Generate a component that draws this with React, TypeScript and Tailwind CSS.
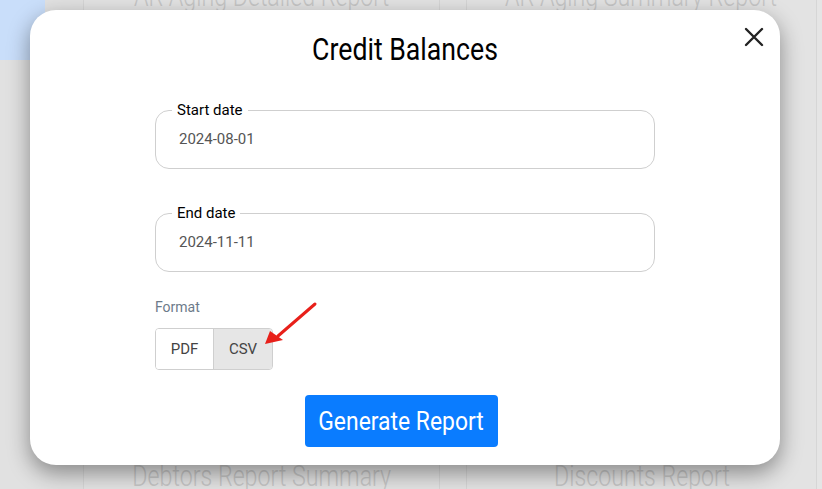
import React from "react";

const cond = { fontFamily: 'Roboto, "Noto Sans", sans-serif' };

function DateField({ label, value }: { label: string; value: string }) {
  return (
    <fieldset className="w-[500px] h-[68px] border border-[#cfcfcf] rounded-[14px] px-[16px] pb-[4px] m-0">
      <legend className="px-[5px] text-[15px] text-black leading-[18px]">{label}</legend>
      <div className="pl-[7px] pt-[11px] text-[15px] text-[#555] leading-[18px]">{value}</div>
    </fieldset>
  );
}

function BgText({ children, className }: { children: React.ReactNode; className: string }) {
  return (
    <div className={"whitespace-nowrap text-[29px] leading-[30px] font-light text-[#c6c6c6] scale-x-[0.8] " + className} style={cond}>
      {children}
    </div>
  );
}

export default function App() {
  return (
    <div className="relative w-[822px] h-[489px] overflow-hidden bg-[#e3e3e3]" style={{ fontFamily: 'Roboto, "Noto Sans", sans-serif' }}>
      {/* background page */}
      <div className="flex h-full">
        <div className="w-[84px] border-r border-[#d6d6d6] bg-[#e1e1e1]">
          <div className="w-[45px] h-[60px] bg-[#c9defa]" />
        </div>
        <div className="w-[356px] border-r border-[#d6d6d6] flex flex-col justify-between items-center">
          <BgText className="mt-[-19px]">AR Aging Detailed Report</BgText>
          <BgText className="mb-[-2px]">Debtors Report Summary</BgText>
        </div>
        <div className="w-[26px]" />
        <div className="w-[351px] border-l border-r border-[#d6d6d6] flex flex-col justify-between items-center">
          <BgText className="mt-[-19px]">AR Aging Summary Report</BgText>
          <BgText className="mb-[-2px]">Discounts Report</BgText>
        </div>
        <div className="flex-1 bg-[#e5e5e5]" />
      </div>

      {/* modal */}
      <div className="absolute left-[30px] top-[10px] w-[750px] h-[455px] bg-white rounded-[26px] shadow-[0_8px_22px_rgba(0,0,0,0.4)] flex flex-col items-center">
        <button className="absolute right-[15px] top-[16px] w-[22px] h-[22px] flex items-center justify-center">
          <svg width="20" height="20" viewBox="0 0 20 20" fill="none" stroke="#222" strokeWidth="2.4" strokeLinecap="round">
            <path d="M2 2 L18 18 M18 2 L2 18" />
          </svg>
        </button>
        <h1 className="mt-[22px] h-[36px] text-[31px] leading-[36px] text-black scale-x-[0.86] whitespace-nowrap" style={cond}>Credit Balances</h1>
        <div className="mt-[33px] flex flex-col gap-[35px]">
          <DateField label="Start date" value="2024-08-01" />
          <DateField label="End date" value="2024-11-11" />
        </div>
        <div className="w-[500px] mt-[26px]">
          <div className="text-[14px] leading-[18px] text-[#6c7a8a]">Format</div>
          <div className="mt-[12px] inline-flex h-[42px] border border-[#cfcfcf] rounded-[4px] overflow-hidden text-[15px] text-[#444]">
            <div className="w-[57px] flex items-center justify-center bg-white">PDF</div>
            <div className="w-[59px] flex items-center justify-center bg-[#e6e6e6] border-l border-[#cfcfcf]">CSV</div>
          </div>
        </div>
        <button className="mt-[25px] mr-[8px] w-[193px] h-[52px] bg-[#0a7cff] rounded-[4px] text-white flex items-center justify-center">
          <span className="text-[26px] leading-[30px] scale-x-[0.88] whitespace-nowrap" style={cond}>Generate Report</span>
        </button>
      </div>

      {/* red annotation arrow */}
      <svg className="absolute left-0 top-0 pointer-events-none" width="822" height="489">
        <line x1="315" y1="304" x2="278" y2="336" stroke="#e8201a" strokeWidth="3" strokeLinecap="round" />
        <polygon points="265,344 270,331 283,340" fill="#e8201a" />
      </svg>
    </div>
  );
}
